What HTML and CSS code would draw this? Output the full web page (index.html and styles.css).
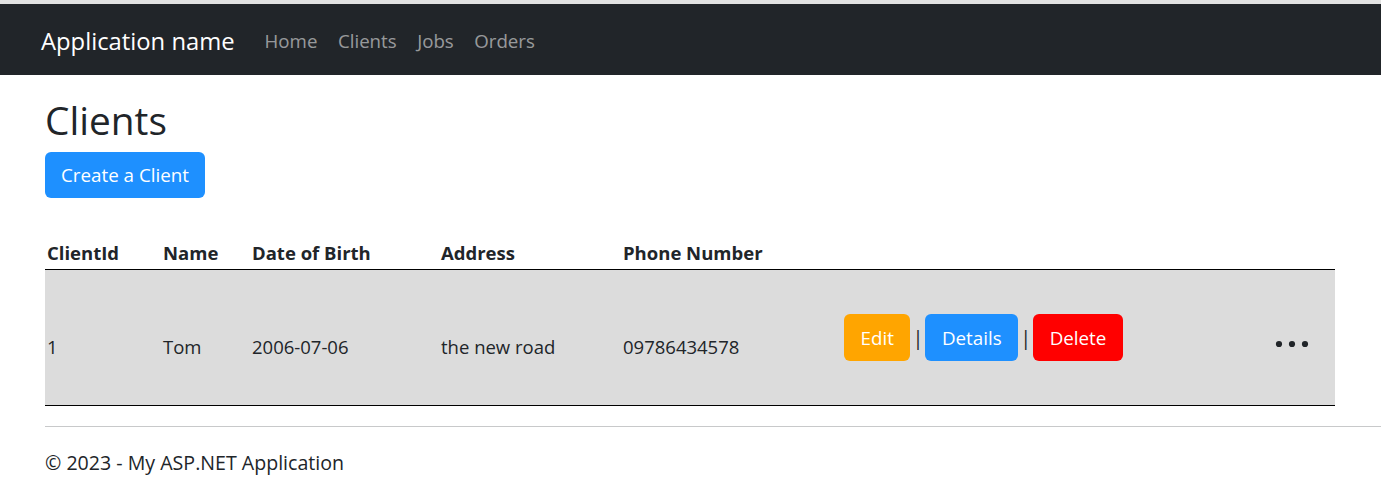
FILE: index.html
```html
<!DOCTYPE html>
<html lang="en">
<head>
<meta charset="utf-8">
<title>Clients - My ASP.NET Application</title>
<link rel="stylesheet" href="styles.css">
</head>
<body>
<div class="topstrip"></div>
<nav class="navbar">
  <a class="brand" href="#">Application name</a>
  <ul class="nav">
    <li><a href="#">Home</a></li>
    <li><a href="#">Clients</a></li>
    <li><a href="#">Jobs</a></li>
    <li><a href="#">Orders</a></li>
  </ul>
</nav>
<main class="container">
  <h1 class="title">Clients</h1>
  <div class="toolbar">
    <a class="btn btn-blue btn-create" href="#">Create a Client</a>
  </div>
  <table class="table">
    <colgroup>
      <col class="c-id"><col class="c-name"><col class="c-dob"><col class="c-addr"><col class="c-phone"><col class="c-actions"><col class="c-more">
    </colgroup>
    <thead>
      <tr>
        <th>ClientId</th>
        <th>Name</th>
        <th>Date of Birth</th>
        <th>Address</th>
        <th>Phone Number</th>
        <th></th>
        <th></th>
      </tr>
    </thead>
    <tbody>
      <tr>
        <td class="cell-text">1</td>
        <td class="cell-text">Tom</td>
        <td class="cell-text">2006-07-06</td>
        <td class="cell-text">the new road</td>
        <td class="cell-text">09786434578</td>
        <td class="cell-actions">
          <div class="actions">
            <a class="btn btn-orange" href="#">Edit</a>
            <span class="sep">|</span>
            <a class="btn btn-blue" href="#">Details</a>
            <span class="sep">|</span>
            <a class="btn btn-red" href="#">Delete</a>
          </div>
        </td>
        <td class="cell-more">
          <svg class="dots" width="36" height="8" viewBox="0 0 36 8" aria-label="More">
            <circle cx="4" cy="4" r="3.1" fill="#212529"/>
            <circle cx="17" cy="4" r="3.1" fill="#212529"/>
            <circle cx="30" cy="4" r="3.1" fill="#212529"/>
          </svg>
        </td>
      </tr>
    </tbody>
  </table>
</main>
<footer class="footer">
  <hr class="rule">
  <p class="copy">© 2023 - My ASP.NET Application</p>
</footer>
</body>
</html>
```
FILE: styles.css
```css
* { box-sizing: border-box; }

html, body {
  margin: 0;
  padding: 0;
  background: #fff;
}

body {
  font-family: "Open Sans", "Noto Sans", "DejaVu Sans", sans-serif;
  font-size: 18.5px;
  line-height: 28px;
  color: #212529;
}

a { text-decoration: none; }

.topstrip {
  height: 4px;
  background: #e2e2e2;
}

.navbar {
  display: flex;
  align-items: center;
  height: 71px;
  padding-top: 3px;
  padding-left: 41px;
  background: #212529;
}

.brand {
  font-size: 23.8px;
  line-height: 32px;
  color: #fff;
  margin-right: 30px;
}

.nav {
  display: flex;
  gap: 20.5px;
  list-style: none;
  margin: 0;
  padding: 0;
}

.nav a {
  color: rgba(255, 255, 255, 0.55);
  font-size: 18.7px;
  line-height: 28px;
}

.container {
  padding-left: 45px;
  padding-right: 46px;
}

.title {
  margin: 23px 0 9px;
  font-size: 38.8px;
  font-weight: 500;
  line-height: 45px;
}

.toolbar {
  display: flex;
  margin-bottom: 27px;
}

.btn {
  display: inline-block;
  padding: 8.5px 16.5px;
  border-radius: 6px;
  color: #fff;
  font-size: 18.8px;
  line-height: 30px;
  white-space: nowrap;
}

.btn-create {
  padding: 8px 16px;
  font-size: 18.8px;
}

.btn-blue { background: #1e90ff; }
.btn-orange { background: #ffa500; }
.btn-red { background: #ff0000; }

.table {
  width: 100%;
  border-collapse: collapse;
}

.c-id { width: 116px; }
.c-name { width: 89px; }
.c-dob { width: 189px; }
.c-addr { width: 182px; }
.c-phone { width: 221px; }
.c-actions { width: 428px; }

.table th {
  text-align: left;
  font-weight: 700;
  padding: 14px 2px 2px;
  line-height: 28px;
  border-bottom: 1px solid #000;
}

.table td {
  background: #dcdcdc;
  border-bottom: 1px solid #000;
  padding: 0 2px;
}

.table .cell-text {
  vertical-align: middle;
  padding-top: 19px;
}

.table .cell-actions {
  padding-top: 44px;
  padding-bottom: 44px;
  vertical-align: top;
}

.actions {
  display: flex;
  align-items: center;
}

.sep {
  width: 15px;
  text-align: center;
  font-size: 20px;
  line-height: 28px;
  color: #212529;
}

.table .cell-more {
  vertical-align: middle;
  padding-top: 12px;
  padding-left: 5px;
}

.dots { display: block; }

.footer {
  padding-left: 45px;
}

.rule {
  margin: 20px 0 0;
  border: 0;
  border-top: 1px solid #c8c9ca;
}

.copy {
  margin: 22px 0 0;
  font-size: 19.6px;
}
```
